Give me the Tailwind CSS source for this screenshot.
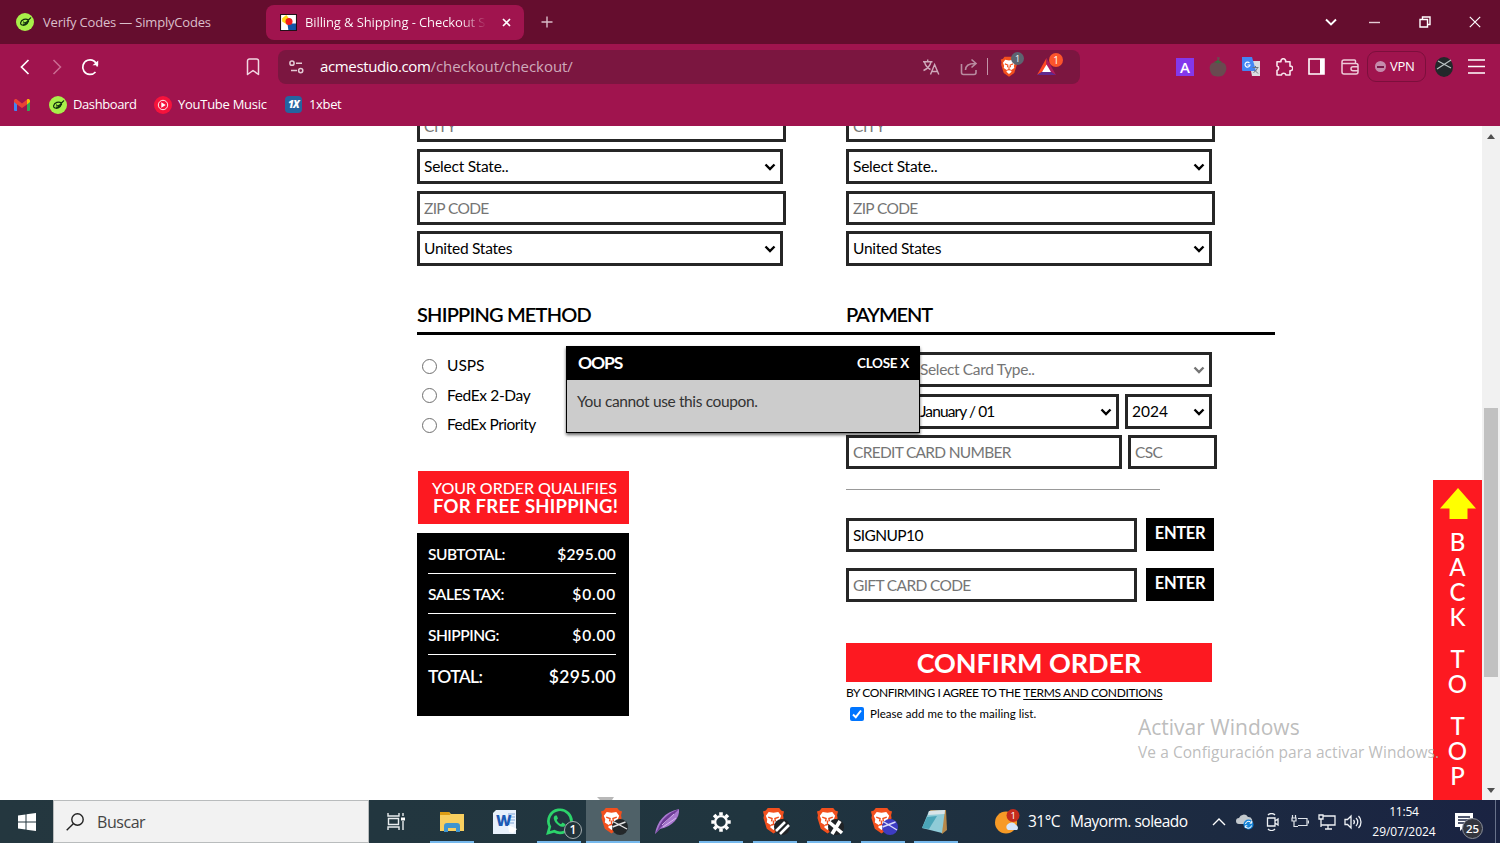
<!DOCTYPE html>
<html lang="en">
<head>
    <meta charset="UTF-8">
    <meta name="viewport" content="width=device-width, initial-scale=1.0">
    <title>Billing & Shipping - Checkout</title>
    <script src="https://cdn.jsdelivr.net/npm/@tailwindcss/browser@4"></script>
</head>
<body class="w-[1500px] h-[843px] overflow-hidden flex flex-col bg-white font-['Open_Sans',sans-serif] whitespace-nowrap">

    <!-- Shared icons -->
    <svg class="hidden">
        <symbol id="simply" viewBox="0 0 18 18">
            <circle cx="9" cy="9" r="9" fill="#a8f04a"/>
            <path d="M12.300 7C10 5 5.200 6.500 4.600 9.800c-.4 3 4.600 3.400 6.800.6M7.500 9c1.200 1.600 3 .6 4.500-1.500l2.600-2.700M7.300 11c2 .8 4-.4 5.200-2.600" fill="none" stroke="#12300f" stroke-width="1.200" stroke-linecap="round"/>
        </symbol>
        <symbol id="lion" viewBox="0 0 24 28">
            <path d="M6 1h12l2 2.500 3 1-1 4 .5 3-3.500 11L12 27.500 5 22.500 1.500 11.500 2 8.500 1 4.500l3-1z" fill="#f2501e"/>
            <path d="M7 5l5 1 5-1 3 4-1.500 4 .5 3-4.500 3 1 2-3.500 3-3.500-3 1-2L5 16l.5-3L4 9z" fill="#fff"/>
            <path d="M6.500 10.500l4 1.500-.5 3M17.500 10.500l-4 1.500.5 3M12 14v4.500M9.500 19l2.500-1 2.500 1" fill="none" stroke="#f2501e" stroke-width="1.500"/>
        </symbol>
        <symbol id="chevron" viewBox="0 0 12 8">
            <path d="M1.500 1.500L6 6l4.500-4.500" fill="none" stroke="currentColor" stroke-width="2.400"/>
        </symbol>
    </svg>

    <!-- Tab strip -->
    <div class="h-11 shrink-0 bg-[#650d2e] flex items-center text-[13px] text-white">
        <div class="w-[266px] flex items-center pl-4">
            <svg class="w-[18px] h-[18px]"><use href="#simply"/></svg>
            <span class="ml-[9px] pt-px text-[#dbbfca] tracking-[-0.19px]">Verify Codes — SimplyCodes</span>
        </div>
        <div class="w-[258px] h-[35px] rounded-lg bg-[#a0144e] flex items-center pl-[14px] pr-[13px]">
            <svg class="w-[17px] h-[17px] shrink-0" viewBox="0 0 16 16">
                <path d="M0 0h16v16H0z" fill="#fff"/><path d="M2 4l4-3 3 4-2 5-5-3z" fill="#ffd814"/><path d="M7 9h9v7H8z" fill="#1455a8"/><circle cx="8.500" cy="7" r="3.300" fill="#f21c1c"/><path d="M.5.5h15v15H.5z" fill="none" stroke="#221018"/>
            </svg>
            <span class="ml-2 pt-px w-[182px] overflow-hidden tracking-[-0.11px] bg-gradient-to-r from-white from-85% to-transparent bg-clip-text text-transparent">Billing &amp; Shipping - Checkout S</span>
            <svg class="w-[9px] h-[9px] ml-auto" viewBox="0 0 9 9"><path d="M1 1l7 7M8 1L1 8" stroke="#fff" stroke-width="1.700"/></svg>
        </div>
        <svg class="w-3 h-3 ml-[17px]" viewBox="0 0 12 12"><path d="M6 .5v11M.5 6h11" stroke="#d9bcc8" stroke-width="1.400"/></svg>
        <div class="ml-auto flex items-center pr-[19px] text-white">
            <svg class="w-3 h-2 mr-[32px]" viewBox="0 0 12 8"><path d="M1 1.500l5 5 5-5" fill="none" stroke="#fff" stroke-width="1.900"/></svg>
            <svg class="w-[11px] h-3 mr-[39px]" viewBox="0 0 11 12"><path d="M0 6.500h11" stroke="#e5ccd5" stroke-width="1.400"/></svg>
            <svg class="w-3 h-3 mr-[38px]" viewBox="0 0 12 12"><path d="M1 3.500h7.500V11H1zM3.500 3V1H11v7.500H9" fill="none" stroke="#fff" stroke-width="1.400"/></svg>
            <svg class="w-3 h-3" viewBox="0 0 12 12"><path d="M.8.8l10.400 10.400M11.200.8L.8 11.200" stroke="#fff" stroke-width="1.200"/></svg>
        </div>
    </div>

    <!-- Address bar -->
    <div class="h-[45px] shrink-0 bg-[#a0144e] flex items-center text-white">
        <div class="w-[278px] flex items-center pl-5">
            <svg class="w-[10px] h-4" viewBox="0 0 10 16"><path d="M8.500 1L1.500 8l7 7" fill="none" stroke="#fff" stroke-width="1.700"/></svg>
            <svg class="w-[10px] h-4 ml-[22px]" viewBox="0 0 10 16"><path d="M1.500 1l7 7-7 7" fill="none" stroke="#cb6c92" stroke-width="1.500"/></svg>
            <svg class="w-[18px] h-[18px] ml-[19px]" viewBox="0 0 18 18"><path d="M14.500 14A7.300 7.300 0 1 1 16.300 8.500" fill="none" stroke="#fff" stroke-width="1.700"/><path d="M11.500 7.200h5.700V2.600z" fill="#fff"/></svg>
            <svg class="w-[14px] h-[18px] ml-auto mr-[18px]" viewBox="0 0 14 18"><path d="M1.500 3a2 2 0 0 1 2-2h7a2 2 0 0 1 2 2v13.500L7 12.500l-5.500 4z" fill="none" stroke="#f2d7e2" stroke-width="1.500" stroke-linejoin="round"/></svg>
        </div>
        <div class="w-[802px] h-[34px] rounded-lg bg-[#7b1640] flex items-center pl-[11px] text-[15px]">
            <svg class="w-[15px] h-[14px]" viewBox="0 0 15 14"><g fill="none" stroke="#e3c9d4" stroke-width="1.500"><circle cx="3" cy="3.200" r="2.100"/><path d="M7 3.200h6M2 10.600h6"/><circle cx="11.700" cy="10.600" r="2.100"/></g></svg>
            <span class="ml-4 text-white tracking-[-0.36px]">acmestudio.com<span class="text-[#cfaabb] tracking-[-0.06px]">/checkout/checkout/</span></span>
            <div class="ml-auto flex items-center">
                <svg class="w-[18px] h-[18px]" viewBox="0 0 18 18"><path d="M1 3.700h9.500M5.700 1.500v2M2.500 4c1 4 4 6.500 6 7.500M9 4c-1 4-4 7-7.500 8.500M8.500 16.500L12.600 6.500l4.200 10M10 13.500h5.300" fill="none" stroke="#cfa9ba" stroke-width="1.400"/></svg>
                <svg class="w-[18px] h-[18px] ml-5" viewBox="0 0 18 18"><path d="M1.500 6v8.500a2 2 0 0 0 2 2H14a2 2 0 0 0 2-2V12M5.500 12c0-4.500 3-6.500 9.500-6.500M11.500 1.500l4.500 4-4.500 4" fill="none" stroke="#b98ca0" stroke-width="1.600"/></svg>
                <div class="w-px h-[17px] bg-[#c394a8] ml-[9px]"></div>
                <div class="relative ml-3 w-[18px] h-[21px]">
                    <svg class="w-[18px] h-[21px]"><use href="#lion"/></svg>
                    <span class="absolute left-[11px] -top-1 w-[13px] h-[13px] rounded-full bg-[#5d6470] text-[9px] leading-[13px] text-center">1</span>
                </div>
                <div class="relative ml-[19px] w-[19px] h-[18px] mr-[24px]">
                    <svg class="w-[19px] h-[18px]" viewBox="0 0 19 18"><path d="M9.500 0L0 17l9.500-6z" fill="#ff4724"/><path d="M0 17h19l-9.500-6z" fill="#60298f"/><path d="M9.500 0L19 17l-9.500-6z" fill="#b01d5d"/><path d="M9.500 6.500L5 14h9z" fill="#fff"/></svg>
                    <span class="absolute left-[12px] -top-[5px] w-[14px] h-[14px] rounded-full bg-[#fb542b] text-[10px] leading-[14px] text-center">1</span>
                </div>
            </div>
        </div>
        <div class="ml-auto flex items-center pr-[15px]">
            <div class="w-[18px] h-[18px] bg-[#8338ec] text-center text-[15px] leading-[18px] font-semibold">A</div>
            <svg class="w-[18px] h-[20px] ml-[15px]" viewBox="0 0 18 20"><path d="M9 6c2-1.500 5-1 7 1 1.500 2 2 5 .5 8-2 4-4 4.500-7.500 4.500S3 19 1.500 15 .5 9 2 7c2-2 5-2.500 7-1zM8 0l3 .5L9 6z" fill="#694a50"/><path d="M9 3l-4 2 4 1.500L13 5z" fill="#3d6b40"/></svg>
            <svg class="w-[18px] h-5 ml-[15px]" viewBox="0 0 18 20"><path d="M7 4h11v15H10z" fill="#dbdce0"/><path d="M0 0h10l4 14H1a1 1 0 0 1-1-1z" fill="#4385f4"/><path d="M7.500 6A2.500 2.500 0 1 0 8 8H5.500" stroke="#fff" stroke-width="1.200" fill="none"/><path d="M10.500 10.500h6M13.500 9v1.500M15.500 10.500c-.5 2-2 4-4 5M12 12.500l4 4" stroke="#6c7480" fill="none"/></svg>
            <svg class="w-[18px] h-[18px] ml-[15px]" viewBox="0 0 18 18"><path d="M2 3.800h4a2.400 2.400 0 1 1 4.600 0H15v4.400a2.300 2.300 0 1 1 0 4.500V17h-4a2.400 2.400 0 0 0-4.600 0H2v-4.500a2.300 2.300 0 0 0 0-4.400z" fill="none" stroke="#f8e3ec" stroke-width="1.600" stroke-linejoin="round"/></svg>
            <svg class="w-[17px] h-[17px] ml-[15px]" viewBox="0 0 17 17"><path d="M1 1h15v15H1z" fill="none" stroke="#fff" stroke-width="1.600"/><path d="M12 1h4v15h-4z" fill="#fff"/></svg>
            <svg class="w-[18px] h-4 ml-[16px]" viewBox="0 0 18 16"><path d="M14.500 4.500V2a1 1 0 0 0-1-1H3a2 2 0 0 0-2 2v10a2 2 0 0 0 2 2h12a2 2 0 0 0 2-2V6.500a2 2 0 0 0-2-2H1M17 7.700h-5a2 2 0 0 0 0 4h5" fill="none" stroke="#eecbd9" stroke-width="1.500"/></svg>
            <div class="w-[59px] h-[31px] ml-2 rounded-[9px] border border-[#7c0f3c] flex items-center pl-[7px] text-[13px]">
                <div class="w-[11px] h-[11px] rounded-full bg-[#c58bac] flex items-center justify-center"><div class="w-[7px] h-[2px] bg-[#7c1648]"></div></div>
                <span class="ml-1 tracking-[-0.3px]">VPN</span>
            </div>
            <svg class="w-[18px] h-5 ml-[9px]" viewBox="0 0 18 20"><ellipse cx="9" cy="10" rx="9" ry="10" fill="#22282a"/><path d="M2 12L16 3M3 4l13 7" stroke="#b9c3c3" stroke-width="1.200"/></svg>
            <svg class="w-[17px] h-[15px] ml-[15px]" viewBox="0 0 17 15"><path d="M0 1h17M0 7.500h17M0 14h17" stroke="#fff" stroke-width="1.500"/></svg>
        </div>
    </div>

    <!-- Bookmarks -->
    <div class="h-[37px] shrink-0 bg-[#a0144e] flex items-center pb-[6px] pl-[14px] text-[13px] text-white">
        <svg class="w-4 h-3" viewBox="0 0 16 12"><path d="M0 2l3 2v8H1a1 1 0 0 1-1-1z" fill="#4285f4"/><path d="M13 4l3-2v9a1 1 0 0 1-1 1h-2z" fill="#34a853"/><path d="M0 2C0 0 2-.5 3 .5L8 4.500 13 .5v5L8 9 3 5.500 0 3z" fill="#ea4335"/><path d="M13 .5c1-1 3-.5 3 1.500v1l-3 2.500z" fill="#fbbc04"/></svg>
        <svg class="w-[18px] h-[18px] ml-[19px]"><use href="#simply"/></svg>
        <span class="ml-[6px] w-[64px] tracking-[-0.4px]">Dashboard</span>
        <svg class="w-[18px] h-[18px] ml-[17px]" viewBox="0 0 18 18"><circle cx="9" cy="9" r="9" fill="#f5133c"/><circle cx="9" cy="9" r="4.700" fill="none" stroke="#fff" stroke-width=".9"/><path d="M7.300 6.300v5.400L11.700 9z" fill="#fff"/></svg>
        <span class="ml-[6px] w-[89px] tracking-[-0.27px]">YouTube Music</span>
        <div class="w-[17px] h-[17px] ml-[18px] rounded-[4px] bg-[#2464a0] text-[10px] leading-[16px] text-center font-extrabold italic tracking-[-0.8px]">1X</div>
        <span class="ml-[7px] tracking-[-0.35px]">1xbet</span>
    </div>

    <!-- Page -->
    <div class="relative h-[674px] flex overflow-hidden font-[Lato,sans-serif] text-[15.500px] text-black">
        <main class="w-[1482px] pl-[417px]">
            <div class="grid grid-cols-[429px_429px] -mt-[18px]">
                <div class="flex flex-col items-start gap-[7px]">
                    <div class="w-[369px] h-[34px] border-[3px] border-[#262626] px-1 leading-[30px] text-[#757575] tracking-[-0.4px]">CITY</div>
                    <div class="w-[366px] h-[35px] border-[3px] border-[#262626] px-1 flex items-center justify-between"><span class="tracking-[-0.22px]">Select State..</span><svg class="w-3 h-2"><use href="#chevron"/></svg></div>
                    <div class="w-[369px] h-[34px] -mb-px border-[3px] border-[#262626] px-1 leading-[29px] text-[#757575] tracking-[-0.65px]">ZIP CODE</div>
                    <div class="w-[366px] h-[35px] border-[3px] border-[#262626] px-1 flex items-center justify-between"><span class="tracking-[-0.26px]">United States</span><svg class="w-3 h-2"><use href="#chevron"/></svg></div>
                </div>
                <div class="flex flex-col items-start gap-[7px]">
                    <div class="w-[369px] h-[34px] border-[3px] border-[#262626] px-1 leading-[30px] text-[#757575] tracking-[-0.4px]">CITY</div>
                    <div class="w-[366px] h-[35px] border-[3px] border-[#262626] px-1 flex items-center justify-between"><span class="tracking-[-0.22px]">Select State..</span><svg class="w-3 h-2"><use href="#chevron"/></svg></div>
                    <div class="w-[369px] h-[34px] -mb-px border-[3px] border-[#262626] px-1 leading-[29px] text-[#757575] tracking-[-0.65px]">ZIP CODE</div>
                    <div class="w-[366px] h-[35px] border-[3px] border-[#262626] px-1 flex items-center justify-between"><span class="tracking-[-0.26px]">United States</span><svg class="w-3 h-2"><use href="#chevron"/></svg></div>
                </div>
            </div>

            <div class="w-[858px] h-[33px] mt-[36px] border-b-[3px] border-black grid grid-cols-2 text-[20px] leading-[25px] font-semibold">
                <h2 class="tracking-[-0.8px]">SHIPPING METHOD</h2>
                <h2 class="tracking-[-1.1px]">PAYMENT</h2>
            </div>

            <div class="grid grid-cols-[429px_429px]">
                <!-- Shipping options and totals -->
                <div>
                    <div class="flex flex-col pt-4 pl-[5px]">
                        <label class="flex items-center h-[30px]"><span class="w-[15px] h-[15px] rounded-full border border-[#6f6f6f] mr-[10px]"></span><span>USPS</span></label>
                        <label class="flex items-center h-[29px]"><span class="w-[15px] h-[15px] rounded-full border border-[#6f6f6f] mr-[10px]"></span><span class="tracking-[-0.37px]">FedEx 2-Day</span></label>
                        <label class="flex items-center h-[30px]"><span class="w-[15px] h-[15px] rounded-full border border-[#6f6f6f] mr-[10px]"></span><span class="tracking-[-0.5px]">FedEx Priority</span></label>
                    </div>
                    <div class="w-[211px] h-[53px] ml-px mt-[31px] pt-[7px] pl-[14px] bg-[#fd1921] text-white">
                        <p class="text-[16px] leading-[19px] font-medium tracking-[-0.07px]">YOUR ORDER QUALIFIES</p>
                        <p class="pl-px text-[18.500px] leading-[19px] font-bold tracking-[0.23px]">FOR FREE SHIPPING!</p>
                    </div>
                    <div class="w-[212px] h-[183px] mt-[9px] pl-[11px] pr-[13px] bg-black text-white text-[15.500px] font-semibold">
                        <div class="h-[41px] pt-[3px] border-b border-white flex items-center justify-between"><span class="tracking-[-0.5px]">SUBTOTAL:</span><span class="tracking-[0.15px]">$295.00</span></div>
                        <div class="h-[40px] pt-[3px] border-b border-white flex items-center justify-between"><span class="tracking-[-0.45px]">SALES TAX:</span><span class="tracking-[0.8px]">$0.00</span></div>
                        <div class="h-[41px] pt-[3px] border-b border-white flex items-center justify-between"><span class="tracking-[-0.5px]">SHIPPING:</span><span class="tracking-[0.8px]">$0.00</span></div>
                        <div class="h-[43px] pt-[2px] flex items-center justify-between text-[17.500px]"><span class="tracking-[-0.65px]">TOTAL:</span><span class="tracking-[0.3px]">$295.00</span></div>
                    </div>
                </div>

                <!-- Payment form -->
                <div class="pt-[17px]">
                    <div class="w-[366px] h-[35px] border-[3px] border-[#262626] pl-[71px] pr-1 flex items-center justify-between text-[#757575]"><span class="tracking-[-0.35px]">Select Card Type..</span><svg class="w-3 h-2"><use href="#chevron"/></svg></div>
                    <div class="flex gap-[6px] mt-[7px]">
                        <div class="w-[273px] h-[35px] border-[3px] border-[#262626] pl-[71px] pr-1 flex items-center justify-between"><span class="tracking-[-0.9px]">January / 01</span><svg class="w-3 h-2"><use href="#chevron"/></svg></div>
                        <div class="w-[87px] h-[35px] border-[3px] border-[#262626] px-1 flex items-center justify-between"><span>2024</span><svg class="w-3 h-2"><use href="#chevron"/></svg></div>
                    </div>
                    <div class="flex gap-[6px] mt-[6px] text-[#757575] leading-[29px]">
                        <div class="w-[276px] h-[34px] border-[3px] border-[#262626] px-1 tracking-[-0.7px]">CREDIT CARD NUMBER</div>
                        <div class="w-[89px] h-[34px] border-[3px] border-[#262626] px-1 tracking-[-0.6px]">CSC</div>
                    </div>
                    <div class="w-[314px] h-px mt-5 bg-[#999]"></div>
                    <div class="flex gap-[9px] mt-7">
                        <div class="w-[291px] h-[34px] border-[3px] border-[#262626] px-1 leading-[29px] tracking-[-0.6px]">SIGNUP10</div>
                        <button class="w-[68px] h-[33px] bg-black text-white text-[16.500px] font-bold pb-[2px] tracking-[-0.35px]">ENTER</button>
                    </div>
                    <div class="flex gap-[9px] mt-[16px]">
                        <div class="w-[291px] h-[34px] border-[3px] border-[#262626] px-1 leading-[29px] text-[#757575] tracking-[-0.65px]">GIFT CARD CODE</div>
                        <button class="w-[68px] h-[33px] bg-black text-white text-[16.500px] font-bold pb-[2px] tracking-[-0.35px]">ENTER</button>
                    </div>
                    <button class="block w-[366px] h-[39px] mt-[41px] bg-[#fd1921] text-white text-[27px] leading-[39px] font-bold tracking-[-0.05px]">CONFIRM ORDER</button>
                    <p class="text-[12px] leading-[21px] tracking-[-0.42px]">BY CONFIRMING I AGREE TO THE <a class="underline underline-offset-2 tracking-[-0.35px]">TERMS AND CONDITIONS</a></p>
                    <label class="flex items-center h-[21px] pl-[4px] text-[11.500px]">
                        <svg class="w-[14px] h-[14px] mr-[6px]" viewBox="0 0 14 14"><rect width="14" height="14" rx="2" fill="#0075ff"/><path d="M3 7.500l2.800 2.700L11 3.500" fill="none" stroke="#fff" stroke-width="2"/></svg>
                        <span class="tracking-[0.05px]">Please add me to the mailing list.</span>
                    </label>
                </div>
            </div>
        </main>

        <!-- Scrollbar -->
        <div class="w-[18px] bg-[#f1f1f1] flex flex-col items-center">
            <svg class="w-2 h-[5px] mt-2" viewBox="0 0 8 5"><path d="M4 0l4 5H0z" fill="#505050"/></svg>
            <div class="w-[14px] h-[269px] mt-[269px] bg-[#c1c1c1]"></div>
            <svg class="w-2 h-[5px] mt-auto mb-[7px]" viewBox="0 0 8 5"><path d="M4 5L0 0h8z" fill="#505050"/></svg>
        </div>

        <!-- Coupon dialog -->
        <div class="absolute left-[566px] top-[220px] w-[354px] h-[87px] border border-black bg-[#ccc] shadow-[0_2px_3px_rgba(0,0,0,0.6)]">
            <div class="h-[33px] bg-black text-white font-bold flex items-center justify-between pl-[11px] pr-[10px] pb-px">
                <span class="text-[17.500px] tracking-[-1.100px]">OOPS</span><span class="text-[13.500px] tracking-[-0.3px]">CLOSE X</span>
            </div>
            <p class="pl-[10px] pt-[11px] leading-[20px] text-[#333] tracking-[-0.37px]">You cannot use this coupon.</p>
        </div>

        <!-- Back to top -->
        <div class="absolute left-[1433px] top-[354px] w-[49px] h-[320px] bg-[#fd1921] text-white flex flex-col items-center text-[24px] leading-[25px] font-medium">
            <svg class="w-9 h-[31px] mt-2 mb-[10px] shrink-0" viewBox="0 0 36 31"><path d="M18 0l18 20.500h-8.500V31h-18V20.500H0z" fill="#ff0"/></svg>
            <span>B</span><span>A</span><span>C</span><span>K</span>
            <span class="mt-[17px]">T</span><span>O</span>
            <span class="mt-[17px]">T</span><span>O</span><span>P</span>
        </div>

        <!-- Activation watermark -->
        <div class="absolute left-[1138px] top-[587px] font-['Open_Sans',sans-serif] text-[#b5b5b5]/90">
            <p class="text-[21px] leading-[29px]">Activar Windows</p>
            <p class="text-[15.500px] leading-[21px] tracking-[0.06px]">Ve a Configuración para activar Windows.</p>
        </div>
        <svg class="absolute left-[597px] top-[671px] w-[17px] h-[3px]" viewBox="0 0 17 3"><path d="M0 0h17l-2 3H3z" fill="#b8b8b8"/></svg>
    </div>

    <!-- Taskbar -->
    <div class="h-[43px] shrink-0 flex bg-gradient-to-r from-[#24373f] via-[#20353f] to-[#1a2342] text-white">
        <div class="w-[53px] flex items-center justify-center">
            <svg class="w-[18px] h-[18px]" viewBox="0 0 18 18"><path d="M0 2.500l7.500-1v7H0zM8.500 1.300L18 0v8.500H8.500zM0 9.500h7.500v7L0 15.500zM8.500 9.500H18V18l-9.500-1.300z" fill="#fff"/></svg>
        </div>
        <div class="w-[316px] bg-[#f2f2f2] border border-[#b9bcbd] flex items-center pl-3 text-[#444] text-[16px]">
            <svg class="w-[18px] h-[18px]" viewBox="0 0 18 18"><circle cx="11.500" cy="6.500" r="5.700" fill="none" stroke="#222" stroke-width="1.400"/><path d="M7.500 10.500L.7 17.300" stroke="#222" stroke-width="1.400"/></svg>
            <span class="ml-[13px] tracking-[-0.45px]">Buscar</span>
        </div>
        <div class="w-[55px] flex items-center justify-center">
            <svg class="w-[19px] h-[17px]" viewBox="0 0 19 17"><path d="M1 0v3h11V0M1 17v-3h11v3M1.500 5.500h10v6h-10zM16 0v3M16 8v9" fill="none" stroke="#e9edef" stroke-width="1.400"/><path d="M14 4.500h4v3h-4z" fill="#fff"/></svg>
        </div>
        <div class="relative w-[54px] flex items-center justify-center pl-[2px]">
            <svg class="w-6 h-5" viewBox="0 0 24 20"><path d="M0 0h9l2 2h13v17H0z" fill="#f8cf5f"/><path d="M0 0h9l1.500 3H0z" fill="#dc9d14"/><path d="M4 20v-6a3 3 0 0 1 3-3h10a3 3 0 0 1 3 3v6h-4v-4H8v4z" fill="#3f95cf"/></svg>
            <div class="absolute bottom-0 left-[6px] w-[44px] h-[2px] bg-[#76b9ed]"></div>
        </div>
        <div class="w-[54px] flex items-center justify-center">
            <svg class="w-6 h-6" viewBox="0 0 24 24"><path d="M3 0h20v24H0V3z" fill="#e8f1fc"/><path d="M15 4h7M17 7h5M17 10h5M17 13h4" stroke="#80a5d8"/><text x="3" y="16" font-family="Open Sans" font-weight="800" font-size="15" fill="#1d5bb5">W</text><path d="M15 15l9 4-4 4-4-1z" fill="#fff"/></svg>
        </div>
        <div class="relative w-[54px] flex items-center justify-center pl-px">
            <svg class="w-[27px] h-[27px]" viewBox="0 0 27 27"><path d="M2 25l1.800-6.300A11.500 11.500 0 1 1 8.300 23.300z" fill="none" stroke="#2cd46b" stroke-width="2.700"/><path d="M9.500 7.500c-1 0-2 1.500-1.700 3.200.7 3.500 4.500 7.300 8.200 8.100 2 .3 3.500-1 3.500-2.600L16.500 14.500 15 16.200c-2-.7-3.700-2.400-4.300-4.200L12 10.500l-1.200-3z" fill="#2cd46b"/></svg>
            <span class="absolute left-[32px] top-[21px] w-[18px] h-[18px] rounded-full border border-[#a6afb2] bg-[#22333a] text-[12px] leading-[16px] text-center font-semibold">1</span>
            <div class="absolute bottom-0 left-[5px] w-[44px] h-[2px] bg-[#76b9ed]"></div>
        </div>
        <div class="relative w-[54px] flex items-center justify-center pl-1 bg-[#4f6168]">
            <svg class="w-[31px] h-[29px]" viewBox="0 0 31 29"><use href="#lion" width="23" height="27"/><circle cx="20" cy="20" r="8" fill="#24282a"/><path d="M12.500 20l13-5M14 15l13 7" stroke="#e4e4e4" stroke-width="1.400"/></svg>
            <div class="absolute bottom-0 inset-x-0 h-[2px] bg-[#76b9ed]"></div>
        </div>
        <div class="w-[54px] flex items-center justify-center">
            <svg class="w-[26px] h-[27px]" viewBox="0 0 26 27"><path d="M1 26C3 14 10 4 25 1c1 9-6 17-19 20z" fill="#a878cf"/><path d="M4 21C7 12 14 5 25 1 17 9 11 15 1 26" fill="#6d3b96"/><path d="M8 17l12-11M9 19l13-9" stroke="#d8b8ee"/></svg>
        </div>
        <div class="relative w-[54px] flex items-center justify-center">
            <svg class="w-5 h-5" viewBox="0 0 20 20"><circle cx="10" cy="10" r="5.900" fill="none" stroke="#fff" stroke-width="2.400"/><g stroke="#fff" stroke-width="3.600"><path d="M10 .3v3M10 16.700v3M.3 10h3M16.700 10h3M3.100 3.100l2.200 2.200M14.700 14.700l2.200 2.200M16.900 3.100l-2.200 2.200M5.300 14.700l-2.200 2.200"/></g></svg>
            <div class="absolute bottom-0 left-[5px] w-[44px] h-[2px] bg-[#76b9ed]"></div>
        </div>
        <div class="relative w-[54px] flex items-center justify-center pl-1">
            <svg class="w-[31px] h-[29px]" viewBox="0 0 31 29"><use href="#lion" width="23" height="27"/><circle cx="20" cy="20" r="8" fill="#202326"/><path d="M14 24l9-9M18 27l9-9" stroke="#fff" stroke-width="2.600"/></svg>
            <div class="absolute bottom-0 left-[5px] w-[44px] h-[2px] bg-[#76b9ed]"></div>
        </div>
        <div class="relative w-[54px] flex items-center justify-center pl-1">
            <svg class="w-[31px] h-[29px]" viewBox="0 0 31 29"><use href="#lion" width="23" height="27"/><circle cx="20" cy="20" r="8" fill="#202326"/><path d="M13 15l13 11M24 14l-8 13" stroke="#fff" stroke-width="3.600"/></svg>
            <div class="absolute bottom-0 left-[5px] w-[44px] h-[2px] bg-[#76b9ed]"></div>
        </div>
        <div class="relative w-[54px] flex items-center justify-center pl-1">
            <svg class="w-[31px] h-[29px]" viewBox="0 0 31 29"><use href="#lion" width="23" height="27"/><circle cx="20" cy="20" r="8" fill="#3d3cc2"/><path d="M12.500 20l13-5M14 15l13 8" stroke="#d8dafa" stroke-width="1.400"/></svg>
            <div class="absolute bottom-0 left-[5px] w-[44px] h-[2px] bg-[#76b9ed]"></div>
        </div>
        <div class="relative w-[54px] flex items-center justify-center pr-1">
            <svg class="w-[26px] h-[25px]" viewBox="0 0 26 25"><path d="M8 1h16l1 20-5 4z" fill="#b8894a"/><path d="M7 2l16-1-3 23L0 19z" fill="#8fcbd7"/><path d="M7 2l16-1-.5 4L6 6z" fill="#d9e4e8"/><path d="M5 8l10-1-8 13-7-1z" fill="#4aa5b8"/></svg>
            <div class="absolute bottom-0 left-1 w-[44px] h-[2px] bg-[#76b9ed]"></div>
        </div>

        <div class="ml-[31px] flex items-center text-[15.500px]">
            <svg class="w-[26px] h-[25px]" viewBox="0 0 26 25"><circle cx="11" cy="13.500" r="11" fill="#f79a26"/><path d="M13 21a3.500 3.500 0 0 1 0-6 5 5 0 0 1 8 1 3 3 0 0 1 1 5z" fill="#d5e6fb"/><circle cx="18" cy="6.500" r="6.500" fill="#c42b1c"/><text x="15.500" y="10" font-family="Open Sans" font-size="9.500" fill="#fff">1</text></svg>
            <span class="ml-[7px] w-[42px] tracking-[-0.5px]">31°C</span>
            <span class="w-[120px] tracking-[-0.5px]">Mayorm. soleado</span>
        </div>
        <div class="ml-auto flex items-center">
            <svg class="w-[14px] h-2 mr-[10px]" viewBox="0 0 14 8"><path d="M1 7l6-6 6 6" fill="none" stroke="#fff" stroke-width="1.400"/></svg>
            <svg class="w-[18px] h-4 mr-[11px]" viewBox="0 0 18 16"><path d="M3 10a3 3 0 0 1 0-6 5 5 0 0 1 9-1 4 4 0 0 1 3 7z" fill="#c3c9ce"/><circle cx="12.500" cy="10.500" r="5" fill="#1684d8"/><path d="M9.500 10a3.200 3.200 0 0 1 6-1M15.500 11.500a3.200 3.200 0 0 1-6 1M15.700 7v2.200h-2M9.300 14v-2.200h2" fill="none" stroke="#fff"/></svg>
            <svg class="w-[15px] h-[18px] mr-[11px]" viewBox="0 0 15 18"><path d="M2.500 5h7.500v8H2.500zM10 8l3-2v6l-3-2M3 2c2-2 5-2 7 0M3 16c2 2 5 2 7 0" fill="none" stroke="#eef1f5" stroke-width="1.300"/></svg>
            <svg class="w-[18px] h-[13px] mr-[9px]" viewBox="0 0 18 13"><path d="M1.500 0v3M4.500 0v3M1 3h4v3H1zM3 6v5.500h4M7 3.500h9v7H7M17.500 5.500v3" fill="none" stroke="#dfe4ea" stroke-width="1.200"/></svg>
            <svg class="w-[18px] h-4 mr-2" viewBox="0 0 18 16"><path d="M5.500 2H17v9H3V7M10 11v4M7 15h7M1 1h4v4H1zM3 5v8" fill="none" stroke="#eef1f5" stroke-width="1.300"/></svg>
            <svg class="w-[19px] h-4 mr-2" viewBox="0 0 19 16"><path d="M1 5.500h2.500L7 2v12l-3.500-3.500H1zM9.500 6a3 3 0 0 1 0 4M12 4a5.500 5.500 0 0 1 0 8M14.500 2a8.500 8.500 0 0 1 0 12" fill="none" stroke="#eef1f5" stroke-width="1.300"/></svg>
            <div class="w-[66px] text-[12px] leading-[20px] text-center"><p class="tracking-[-0.2px]">11:54</p><p class="tracking-[-0.03px]">29/07/2024</p></div>
            <div class="relative w-[59px] h-full border-r border-[#68728a] mr-1">
                <svg class="absolute left-[18px] top-[13px] w-[18px] h-[18px]" viewBox="0 0 18 18"><path d="M0 0h18v14H9l-4 4v-4H0z" fill="#fff"/><path d="M3 4h12M3 7h12M3 10h8" stroke="#1a2342" stroke-width="1.300"/></svg>
                <span class="absolute left-[25px] top-[18px] w-[21px] h-[21px] rounded-full border border-[#8b8f99] bg-[#33363f] text-[11.500px] leading-[19px] text-center font-semibold">25</span>
            </div>
        </div>
    </div>
</body>
</html>
